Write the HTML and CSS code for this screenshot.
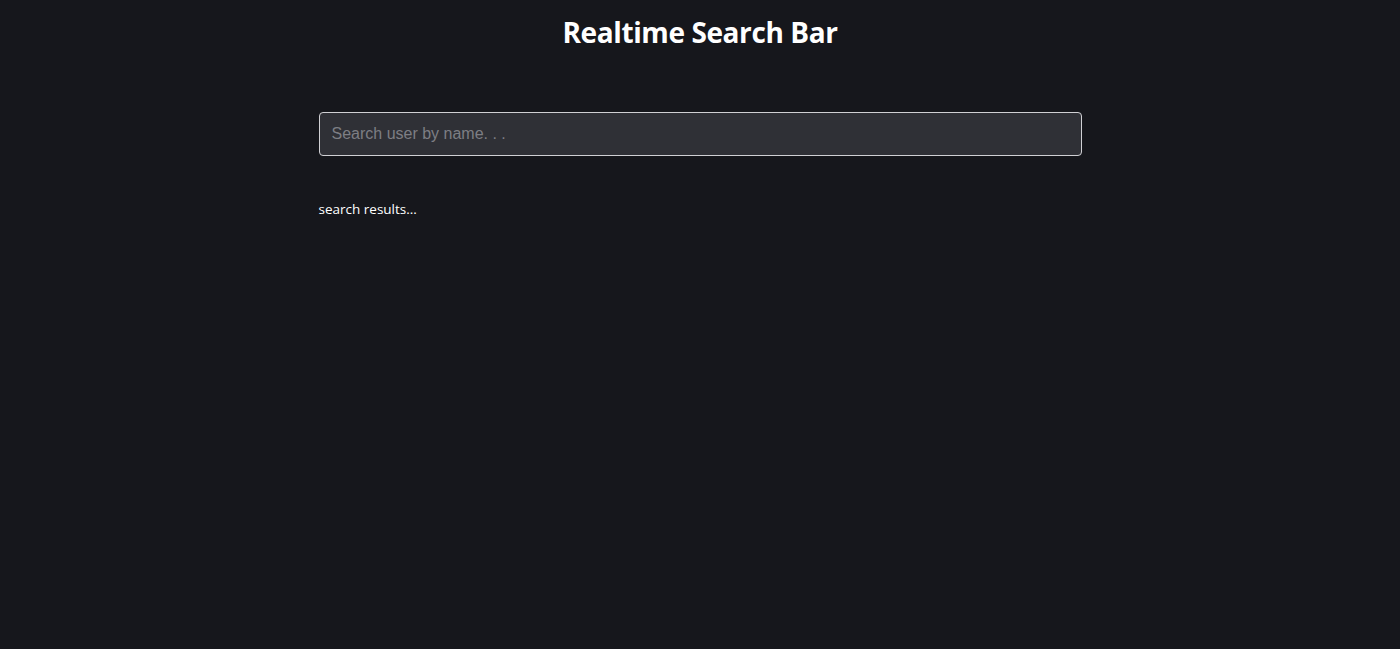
FILE: index.html
```html
<!DOCTYPE html>
<html>
<head>
<meta charset="utf-8">
<link rel="stylesheet" href="styles.css">
</head>
<body>
<div class="page">
  <h1 class="title">Realtime Search Bar</h1>
  <div class="content">
    <input class="search" type="text" placeholder="Search user by name. . .">
    <p class="results">search results...</p>
  </div>
</div>
</body>
</html>
```
FILE: styles.css
```css
html, body {
  margin: 0;
  padding: 0;
  background: #16171c;
  height: 100%;
}
.page {
  display: flex;
  flex-direction: column;
  align-items: center;
  font-family: "Open Sans", "Noto Sans", sans-serif;
  color: #ffffff;
}
.title {
  margin: 13px 0 0 0;
  font-size: 28px;
  font-weight: 700;
  line-height: 38px;
  letter-spacing: -0.4px;
}
.content {
  width: 763px;
  margin-top: 61px;
  display: flex;
  flex-direction: column;
}
.search {
  box-sizing: border-box;
  width: 100%;
  height: 44px;
  padding: 0 12px;
  background: #2f3036;
  border: 1px solid #d0d0d4;
  border-radius: 4px;
  color: #ffffff;
  font-family: "Liberation Sans", Arial, sans-serif;
  font-size: 16px;
  outline: none;
}
.search::placeholder {
  color: #7d7e84;
}
.results {
  margin: 43px 0 0 0;
  font-size: 13.5px;
  line-height: 20px;
}
```
